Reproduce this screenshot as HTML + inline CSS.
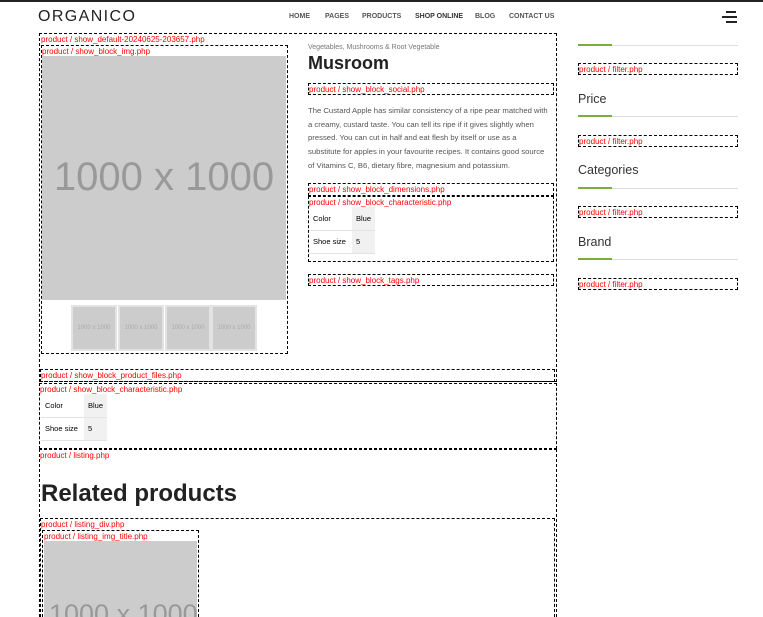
<!DOCTYPE html>
<html style="width:763px;height:617px;overflow:hidden"><head><meta charset="utf-8"><style>
*{margin:0;padding:0;box-sizing:border-box}
body{width:763px;height:617px;overflow:hidden;background:#fff;font-family:"Liberation Sans",sans-serif;position:relative}
.a{position:absolute}
.d{position:absolute;border:1px dashed #000}
.l{position:absolute;color:#f00;font-size:8px;line-height:8px;white-space:nowrap}
.nav{position:absolute;top:13px;font-size:7px;font-weight:bold;color:#555}
.g{position:absolute;background:#ccc}
table{border-collapse:collapse;font-size:7.5px;color:#000}
td{height:23px;padding:0 4px;border-bottom:1px solid #e3e3e3}
td.v{background:#f1f1f1}
.sh{position:absolute;left:578px;font-size:12.5px;color:#333}
.ln{position:absolute;left:578px;width:160px;height:1px;background:#ddd}
.ln i{position:absolute;left:0;top:-1px;width:34px;height:2px;background:#7cac3a}
</style></head><body>
<div class="a" style="left:0;top:0;width:763px;height:2px;background:#222"></div>
<div class="a" style="left:38px;top:8px;font-size:16px;letter-spacing:1.4px;color:#222">ORGANICO</div>
<div class="nav" style="left:289px">HOME</div>
<div class="nav" style="left:325px">PAGES</div>
<div class="nav" style="left:362px">PRODUCTS</div>
<div class="nav" style="left:415px;color:#333">SHOP ONLINE</div>
<div class="nav" style="left:475px">BLOG</div>
<div class="nav" style="left:509px">CONTACT US</div>
<div class="a" style="left:726px;top:11px;width:10px;height:2px;background:#222"></div>
<div class="a" style="left:722px;top:16px;width:15px;height:2px;background:#222"></div>
<div class="a" style="left:726px;top:21px;width:11px;height:2px;background:#222"></div>

<div class="d" style="left:39px;top:33px;width:518px;height:349px"></div>
<div class="l" style="left:41px;top:36px">product / show_default-20240625-203657.php</div>
<div class="d" style="left:41px;top:45px;width:247px;height:309px"></div>
<div class="l" style="left:42px;top:48px">product / show_block_img.php</div>
<div class="g" style="left:42px;top:56px;width:244px;height:244px"></div>
<div class="a" style="left:42px;top:155px;width:244px;text-align:center;font-size:40px;color:#999">1000 x 1000</div>
<div class="a" style="left:71px;top:305px;width:46px;height:46px;border:2px solid #e3e3e3;background:#ccc;font-size:6px;color:#aaa;text-align:center;line-height:42px">1000 x 1000</div>
<div class="a" style="left:118px;top:305px;width:46px;height:46px;border:2px solid #e3e3e3;background:#ccc;font-size:6px;color:#aaa;text-align:center;line-height:42px">1000 x 1000</div>
<div class="a" style="left:165px;top:305px;width:46px;height:46px;border:2px solid #e3e3e3;background:#ccc;font-size:6px;color:#aaa;text-align:center;line-height:42px">1000 x 1000</div>
<div class="a" style="left:211px;top:305px;width:46px;height:46px;border:2px solid #e3e3e3;background:#ccc;font-size:6px;color:#aaa;text-align:center;line-height:42px">1000 x 1000</div>

<div class="a" style="left:308px;top:44px;font-size:7px;color:#777">Vegetables, Mushrooms &amp; Root Vegetable</div>
<div class="a" style="left:308px;top:53px;font-size:18px;font-weight:bold;color:#222">Musroom</div>
<div class="d" style="left:308px;top:83px;width:246px;height:12px"></div>
<div class="l" style="left:309px;top:86px">product / show_block_social.php</div>
<div class="a" style="left:308px;top:104px;width:240px;font-size:7.7px;line-height:13.7px;color:#555">The Custard Apple has similar consistency of a ripe pear matched with a creamy, custard taste. You can tell its ripe if it gives slightly when pressed. You can cut in half and eat flesh by itself or use as a substitute for apples in your favourite recipes. It contains good source of Vitamins C, B6, dietary fibre, magnesium and potassium.</div>
<div class="d" style="left:308px;top:183px;width:246px;height:13px"></div>
<div class="l" style="left:309px;top:186px">product / show_block_dimensions.php</div>
<div class="d" style="left:308px;top:196px;width:246px;height:66px"></div>
<div class="l" style="left:309px;top:199px">product / show_block_characteristic.php</div>
<table class="a" style="left:309px;top:207px"><tr><td style="width:43px">Color</td><td class="v">Blue</td></tr><tr><td>Shoe size</td><td class="v">5</td></tr></table>
<div class="d" style="left:308px;top:274px;width:246px;height:12px"></div>
<div class="l" style="left:309px;top:277px">product / show_block_tags.php</div>

<div class="d" style="left:40px;top:369px;width:515px;height:13px"></div>
<div class="l" style="left:41px;top:372px">product / show_block_product_files.php</div>
<div class="d" style="left:39px;top:383px;width:518px;height:66px"></div>
<div class="l" style="left:40px;top:386px">product / show_block_characteristic.php</div>
<table class="a" style="left:41px;top:394px"><tr><td style="width:43px">Color</td><td class="v">Blue</td></tr><tr><td>Shoe size</td><td class="v">5</td></tr></table>
<div class="d" style="left:39px;top:449px;width:518px;height:168px;border-bottom:none"></div>
<div class="l" style="left:40px;top:452px">product / listing.php</div>
<div class="a" style="left:41px;top:480px;font-size:24px;font-weight:bold;color:#222">Related products</div>
<div class="d" style="left:40px;top:518px;width:515px;height:99px;border-bottom:none"></div>
<div class="l" style="left:41px;top:521px">product / listing_div.php</div>
<div class="d" style="left:42px;top:530px;width:157px;height:87px;border-bottom:none"></div>
<div class="l" style="left:44px;top:533px">product / listing_img_title.php</div>
<div class="g" style="left:44px;top:541px;width:153px;height:76px;overflow:hidden"><div style="position:absolute;left:5px;top:58px;font-size:27px;color:#999;white-space:nowrap">1000 x 1000</div></div>

<div class="ln" style="top:45px"><i></i></div>
<div class="d" style="left:578px;top:63px;width:160px;height:12px"></div>
<div class="l" style="left:579px;top:66px">product / filter.php</div>
<div class="sh" style="top:92px">Price</div>
<div class="ln" style="top:116px"><i></i></div>
<div class="d" style="left:578px;top:135px;width:160px;height:12px"></div>
<div class="l" style="left:579px;top:138px">product / filter.php</div>
<div class="sh" style="top:163px">Categories</div>
<div class="ln" style="top:188px"><i></i></div>
<div class="d" style="left:578px;top:206px;width:160px;height:12px"></div>
<div class="l" style="left:579px;top:209px">product / filter.php</div>
<div class="sh" style="top:235px">Brand</div>
<div class="ln" style="top:259px"><i></i></div>
<div class="d" style="left:578px;top:278px;width:160px;height:12px"></div>
<div class="l" style="left:579px;top:281px">product / filter.php</div>
</body></html>
